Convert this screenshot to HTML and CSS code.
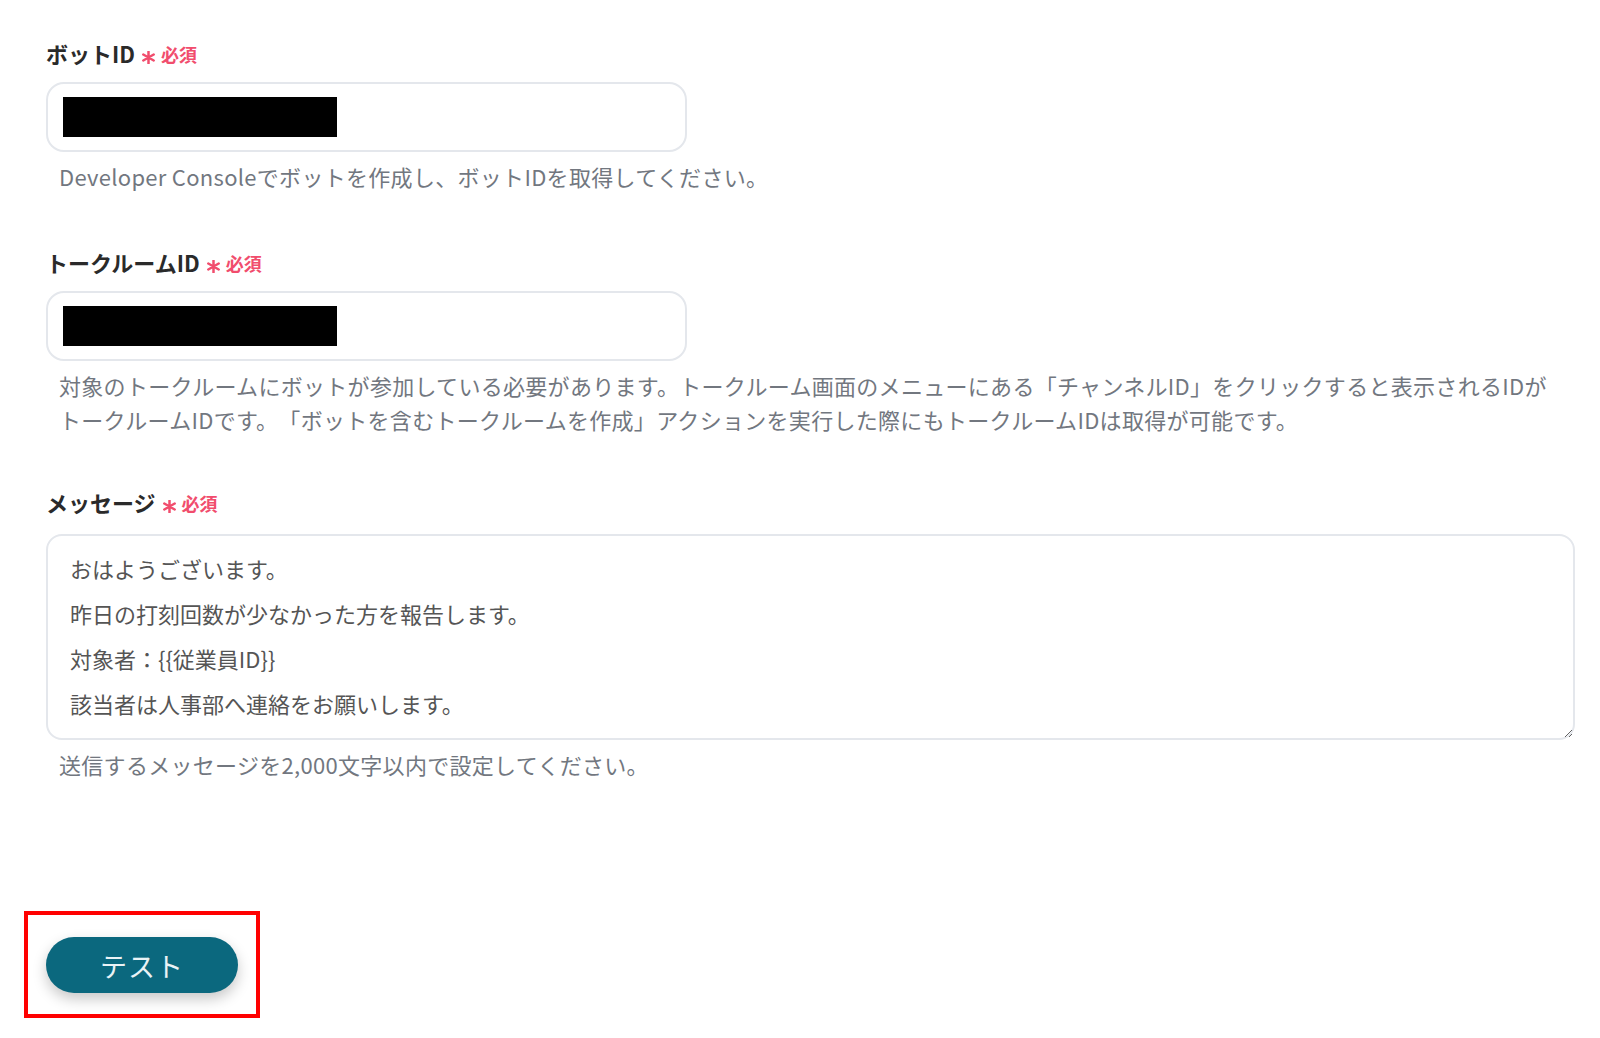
FILE: index.html
```html
<!DOCTYPE html><html lang="ja">
<head>
<meta charset="utf-8">
<title>ボット設定</title>
<link rel="stylesheet" href="styles.css">
</head>
<body>

<form class="form">
	<div class="field">
		<label class="label">ボットID<svg class="req-mark" viewBox="-6 -6 12 12"><path d="M0,-5.5V5.5M-4.8,-2.75L4.8,2.75M-4.8,2.75L4.8,-2.75"/></svg><span class="req">必須</span></label>
		<div class="input"><span class="redact"></span></div>
		<p class="help">Developer Consoleでボットを作成し、ボットIDを取得してください。</p>
	</div>

	<div class="field">
		<label class="label">トークルームID<svg class="req-mark" viewBox="-6 -6 12 12"><path d="M0,-5.5V5.5M-4.8,-2.75L4.8,2.75M-4.8,2.75L4.8,-2.75"/></svg><span class="req">必須</span></label>
		<div class="input"><span class="redact"></span></div>
		<p class="help">対象のトークルームにボットが参加している必要があります。トークルーム画面のメニューにある「チャンネルID」をクリックすると表示されるIDがトークルームIDです。「ボットを含むトークルームを作成」アクションを実行した際にもトークルームIDは取得が可能です。</p>
	</div>

	<div class="field field-msg">
		<label class="label">メッセージ<svg class="req-mark" viewBox="-6 -6 12 12"><path d="M0,-5.5V5.5M-4.8,-2.75L4.8,2.75M-4.8,2.75L4.8,-2.75"/></svg><span class="req">必須</span></label>
		<textarea class="textarea">おはようございます。
昨日の打刻回数が少なかった方を報告します。
対象者：{{従業員ID}}
該当者は人事部へ連絡をお願いします。</textarea>
		<p class="help">送信するメッセージを2,000文字以内で設定してください。</p>
	</div>

	<div class="highlight">
		<button type="button" class="btn-test">テスト</button>
	</div>
</form>

</body></html>
```

FILE: styles.css
```css
body{
	margin: 0;
	background: #fff;
	font-family: "Noto Sans CJK JP", "Noto Sans", sans-serif;
	color: #333;
	text-spacing-trim: space-all;
}

.form{
	display: flex;
	flex-direction: column;
	gap: 54px;
	padding: 38px 25px 0 46px;
}

.field{
	display: flex;
	flex-direction: column;
}
.field-msg{margin-top: -3px;}
.field-msg .label{margin-bottom: 17px;}

.label{
	display: flex;
	align-items: center;
	height: 30px;
	font-size: 22px;
	font-weight: 700;
	color: #2a2a2a;
	margin-bottom: 14px;
}
.req-mark{
	width: 13px;
	height: 13px;
	margin: 0 6px 0 7px;
	position: relative;
	top: 4px;
	stroke: #f14d6d;
	stroke-width: 2.3;
	stroke-linecap: round;
	fill: none;
}
.req{
	color: #f14d6d;
	font-size: 18px;
	font-weight: 700;
	position: relative;
	top: 1px;
}

.input{
	box-sizing: border-box;
	width: 641px;
	height: 70px;
	border: 2px solid #e4e7ec;
	border-radius: 18px;
	padding: 0 15px;
	display: flex;
	align-items: center;
}
.redact{
	display: block;
	width: 274px;
	height: 40px;
	background: #000;
}

.textarea{
	box-sizing: border-box;
	width: 100%;
	height: 206px;
	border: 2px solid #e4e7ec;
	border-radius: 16px;
	padding: 10px 22px;
	font-family: inherit;
	font-size: 22px;
	line-height: 45px;
	color: #555;
	resize: vertical;
	outline: none;
}

.help{
	margin: 7px 0 0 13px;
	padding-right: 20px;
	font-size: 22px;
	line-height: 34px;
	letter-spacing: .3px;
	color: #72777f;
}

.highlight{
	align-self: flex-start;
	margin: 76px 0 0 -22px;
	border: 4px solid #ff0000;
	padding: 22px 18px 21px;
}
.btn-test{
	display: block;
	width: 192px;
	height: 56px;
	border: none;
	border-radius: 28px;
	background: #0b687e;
	color: #eaf3f6;
	font-family: inherit;
	font-size: 27px;
	letter-spacing: 1px;
	box-shadow: 0 6px 14px rgba(0,0,0,.22);
}
```
